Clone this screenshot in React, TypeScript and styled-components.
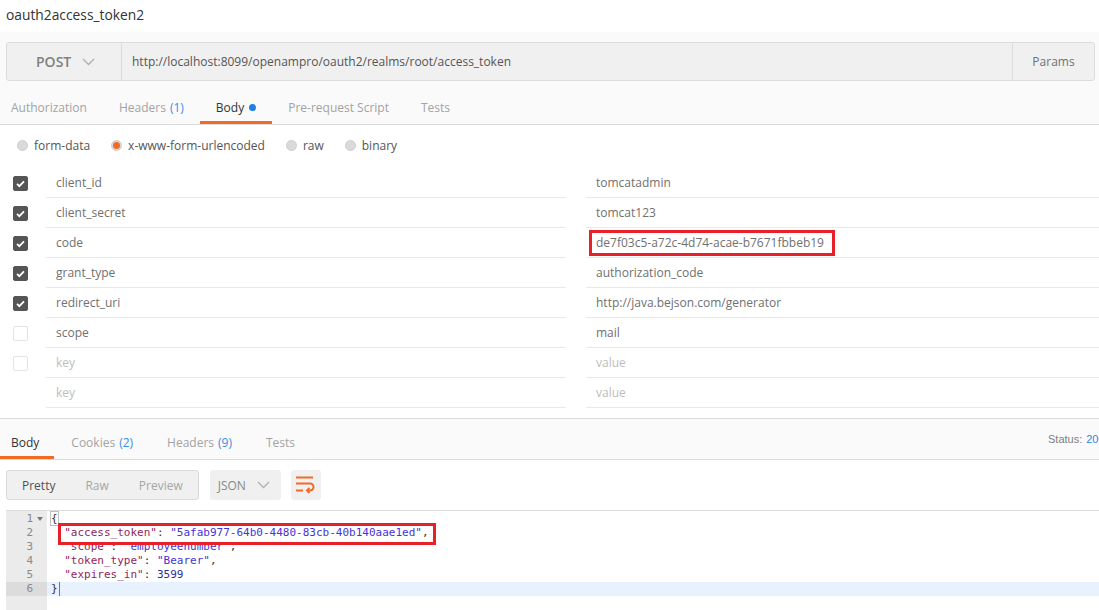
import React from "react";
import styled, { createGlobalStyle } from "styled-components";

const ORANGE = "#f26b24";
const RED = "#e8202a";
const MONO = `"DejaVu Sans Mono", "Liberation Mono", monospace`;

const GlobalStyle = createGlobalStyle`
  html, body { margin: 0; padding: 0; background: #fff; overflow: hidden; }
  body { font-family: "Open Sans", "Noto Sans", sans-serif; }
  * { box-sizing: border-box; }
`;

const Page = styled.div`
  width: 1099px;
  height: 610px;
  overflow: hidden;
  background: #fff;
`;

const Title = styled.div`
  height: 32px;
  padding: 0 6px 4px;
  display: flex;
  align-items: center;
  font-size: 13.8px;
  color: #333;
`;

const RequestPanel = styled.section`
  background: #fafafa;
  border-bottom: 1px solid #dcdcdc;
  padding: 10px 4px 0 6px;
`;

const UrlBar = styled.div`
  display: flex;
  height: 39px;
  border: 1px solid #dcdcdc;
  border-radius: 3px;
  background: #f0f0f0;
`;

const MethodSelect = styled.div`
  width: 115px;
  border-right: 1px solid #dcdcdc;
  display: flex;
  align-items: center;
  padding-left: 29px;
  gap: 11px;
  font-size: 14px;
  font-weight: 600;
  color: #808080;
`;

const UrlText = styled.div`
  flex: 1;
  display: flex;
  align-items: center;
  padding-left: 10px;
  font-size: 12px;
  color: #555;
`;

const ParamsButton = styled.div`
  width: 82px;
  border-left: 1px solid #dcdcdc;
  display: flex;
  align-items: center;
  justify-content: center;
  font-size: 12px;
  color: #707070;
`;

const TabBar = styled.nav`
  display: flex;
  height: 43px;
`;

const Tab = styled.div<{ $active?: boolean }>`
  height: 100%;
  padding: 12px 16px 0;
  display: flex;
  align-items: center;
  border-bottom: 3px solid ${(p) => (p.$active ? ORANGE : "transparent")};
  font-size: 12px;
  color: ${(p) => (p.$active ? "#333" : "#a3a3a3")};
  white-space: nowrap;
  &:first-child { padding-left: 5px; }
`;

const Count = styled.span`
  color: #3b8fe0;
  margin-left: 4px;
`;

const Dot = styled.span`
  display: inline-block;
  width: 7px;
  height: 7px;
  border-radius: 50%;
  background: #1f7ee0;
  margin-left: 5px;
`;

const BodyTypeRow = styled.div`
  display: flex;
  align-items: center;
  height: 43px;
  padding: 0 0 3px 17px;
`;

const RadioOption = styled.label`
  display: flex;
  align-items: center;
  gap: 6px;
  margin-right: 21px;
  font-size: 12px;
  color: #555;
`;

const Radio = styled.span<{ $checked?: boolean }>`
  width: 11px;
  height: 11px;
  border-radius: 50%;
  background: #dadada;
  border: 1px solid #cfcfcf;
  display: flex;
  align-items: center;
  justify-content: center;
  &::after {
    content: "";
    display: ${(p) => (p.$checked ? "block" : "none")};
    width: 7px;
    height: 7px;
    border-radius: 50%;
    background: ${ORANGE};
  }
`;

const Table = styled.div`
  display: flex;
  flex-direction: column;
`;

const Row = styled.div`
  display: grid;
  grid-template-columns: 46px 520px 20px 1fr;
  height: 30px;
`;

const CheckCell = styled.div`
  display: flex;
  align-items: center;
  padding-left: 13px;
`;

const CheckBox = styled.span<{ $checked?: boolean }>`
  width: 15px;
  height: 15px;
  border-radius: 2px;
  background: ${(p) => (p.$checked ? "#555" : "#fff")};
  border: 1px solid ${(p) => (p.$checked ? "#555" : "#e4e4e4")};
  display: flex;
  align-items: center;
  justify-content: center;
`;

const Cell = styled.div<{ $placeholder?: boolean }>`
  border-bottom: 1px solid #e8e8e8;
  display: flex;
  align-items: center;
  padding-left: 10px;
  font-size: 12px;
  color: ${(p) => (p.$placeholder ? "#bdbdbd" : "#707070")};
  white-space: nowrap;
`;

const ValueMark = styled.span`
  display: inline-block;
  border: 3px solid ${RED};
  margin-left: -7px;
  padding: 0 8px 0 4px;
  line-height: 20px;
`;

const ResponseHeader = styled.div`
  display: flex;
  height: 42px;
  margin-top: 10px;
  border-top: 1px solid #dcdcdc;
  border-bottom: 1px solid #dcdcdc;
  background: #fafafa;
`;

const RTab = styled.div<{ $active?: boolean }>`
  padding: 9px 17px 0;
  display: flex;
  align-items: center;
  border-bottom: 3px solid ${(p) => (p.$active ? ORANGE : "transparent")};
  font-size: 12px;
  color: ${(p) => (p.$active ? "#333" : "#a3a3a3")};
  white-space: nowrap;
  &:first-child { padding-left: 11px; padding-right: 15px; }
`;

const Status = styled.div`
  margin-left: auto;
  width: 51px;
  align-self: center;
  white-space: nowrap;
  font-family: "Liberation Sans", Arial, sans-serif;
  font-size: 11px;
  color: #808080;
  span { color: #2a88e6; margin-left: 4px; }
`;

const Toolbar = styled.div`
  display: flex;
  height: 30px;
  margin: 10px 0 0 6px;
`;

const SegGroup = styled.div`
  display: flex;
  border: 1px solid #d9d9d9;
  border-radius: 3px;
  background: #f0f0f0;
`;

const SegButton = styled.div<{ $active?: boolean }>`
  display: flex;
  align-items: center;
  padding: 0 15px;
  font-size: 12px;
  color: ${(p) => (p.$active ? "#505050" : "#a6a6a6")};
`;

const FormatSelect = styled.div`
  display: flex;
  align-items: center;
  gap: 11px;
  margin-left: 11px;
  padding: 0 11px 0 8px;
  background: #f0f0f0;
  border-radius: 3px;
  font-size: 12px;
  color: #888;
`;

const WrapButton = styled.div`
  width: 30px;
  margin-left: 10px;
  background: #f0f0f0;
  border-radius: 3px;
  display: flex;
  align-items: center;
  justify-content: center;
`;

const Editor = styled.div`
  display: flex;
  height: 100px;
  margin: 10px 0 0 6px;
  border-top: 1px solid #dcdcdc;
  font-family: ${MONO};
  font-size: 11px;
`;

const Gutter = styled.div`
  width: 41px;
  padding-top: 1px;
  background: #ebebeb;
  display: flex;
  flex-direction: column;
`;

const GutterCell = styled.div<{ $active?: boolean }>`
  height: 14px;
  line-height: 14px;
  display: grid;
  grid-template-columns: 1fr 14px;
  color: #8a8a8a;
  background: ${(p) => (p.$active ? "#dcdcdc" : "transparent")};
  text-align: right;
`;

const Fold = styled.span`
  display: flex;
  align-items: center;
  justify-content: center;
`;

const Code = styled.div`
  flex: 1;
  padding-top: 1px;
  display: flex;
  flex-direction: column;
`;

const CodeLine = styled.div<{ $active?: boolean }>`
  height: 14px;
  line-height: 14px;
  padding-left: 4px;
  white-space: pre;
  color: #333;
  background: ${(p) => (p.$active ? "#e8f2fe" : "transparent")};
`;

const Key = styled.span`color: #8f1f5f;`;
const Str = styled.span`color: #4433d6;`;
const Num = styled.span`color: #2d2d9a;`;

const Bracket = styled.span`
  outline: 1px solid #bfbfbf;
`;

const Cursor = styled.span`
  display: inline-block;
  width: 0;
  height: 14px;
  vertical-align: top;
  border-left: 1px solid #777;
  margin-left: 1px;
`;

const CodeMark = styled.span`
  position: relative;
  display: inline-block;
  height: 14px;
  &::after {
    content: "";
    position: absolute;
    top: -3px;
    bottom: -5px;
    left: -6px;
    right: -7px;
    border: 3px solid ${RED};
    pointer-events: none;
  }
`;

const Chevron = ({ color = "#b0b0b0" }: { color?: string }) => (
  <svg width="13" height="8" viewBox="0 0 13 8">
    <path d="M1 1l5.5 5.5L12 1" stroke={color} strokeWidth="1.3" fill="none" />
  </svg>
);

const Check = () => (
  <svg width="13" height="13" viewBox="0 0 13 13">
    <path d="M3 6.8l2.3 2.3L10 4.3" stroke="#fff" strokeWidth="1.8" fill="none" />
  </svg>
);

const WrapIcon = () => (
  <svg width="19" height="18" viewBox="0 0 19 18">
    <g stroke={ORANGE} strokeWidth="2" fill="none">
      <path d="M0 1.5H17" />
      <path d="M0 7.5H14a3.5 3.5 0 0 1 0 7H11" />
      <path d="M13.5 12L11 14.5L13.5 17" />
      <path d="M0 14.5H7" />
    </g>
  </svg>
);

const FoldIcon = () => (
  <svg width="6" height="4" viewBox="0 0 6 4">
    <path d="M0 0H6L3 4Z" fill="#777" />
  </svg>
);

type Param = { key: string; value: string; checked?: boolean; box?: boolean; placeholder?: boolean; noCheck?: boolean };

const params: Param[] = [
  { key: "client_id", value: "tomcatadmin", checked: true },
  { key: "client_secret", value: "tomcat123", checked: true },
  { key: "code", value: "de7f03c5-a72c-4d74-acae-b7671fbbeb19", checked: true, box: true },
  { key: "grant_type", value: "authorization_code", checked: true },
  { key: "redirect_uri", value: "http://java.bejson.com/generator", checked: true },
  { key: "scope", value: "mail" },
  { key: "key", value: "value", placeholder: true },
  { key: "key", value: "value", placeholder: true, noCheck: true },
];

export default function App() {
  return (
    <Page>
      <GlobalStyle />
      <Title>oauth2access_token2</Title>
      <RequestPanel>
        <UrlBar>
          <MethodSelect>
            POST
            <Chevron />
          </MethodSelect>
          <UrlText>http://localhost:8099/openampro/oauth2/realms/root/access_token</UrlText>
          <ParamsButton>Params</ParamsButton>
        </UrlBar>
        <TabBar>
          <Tab>Authorization</Tab>
          <Tab>
            Headers<Count>(1)</Count>
          </Tab>
          <Tab $active>
            Body<Dot />
          </Tab>
          <Tab>Pre-request Script</Tab>
          <Tab>Tests</Tab>
        </TabBar>
      </RequestPanel>

      <BodyTypeRow>
        <RadioOption>
          <Radio />
          form-data
        </RadioOption>
        <RadioOption>
          <Radio $checked />
          x-www-form-urlencoded
        </RadioOption>
        <RadioOption>
          <Radio />
          raw
        </RadioOption>
        <RadioOption>
          <Radio />
          binary
        </RadioOption>
      </BodyTypeRow>

      <Table>
        {params.map((p, i) => (
          <Row key={i}>
            <CheckCell>
              {!p.noCheck && <CheckBox $checked={p.checked}>{p.checked && <Check />}</CheckBox>}
            </CheckCell>
            <Cell $placeholder={p.placeholder}>{p.key}</Cell>
            <div />
            <Cell $placeholder={p.placeholder}>
              {p.box ? <ValueMark>{p.value}</ValueMark> : p.value}
            </Cell>
          </Row>
        ))}
      </Table>

      <ResponseHeader>
        <RTab $active>Body</RTab>
        <RTab>
          Cookies<Count>(2)</Count>
        </RTab>
        <RTab>
          Headers<Count>(9)</Count>
        </RTab>
        <RTab>Tests</RTab>
        <Status>
          Status:<span>200 OK</span>
        </Status>
      </ResponseHeader>

      <Toolbar>
        <SegGroup>
          <SegButton $active>Pretty</SegButton>
          <SegButton>Raw</SegButton>
          <SegButton>Preview</SegButton>
        </SegGroup>
        <FormatSelect>
          JSON
          <Chevron />
        </FormatSelect>
        <WrapButton>
          <WrapIcon />
        </WrapButton>
      </Toolbar>

      <Editor>
        <Gutter>
          {[1, 2, 3, 4, 5, 6].map((n) => (
            <GutterCell key={n} $active={n === 6}>
              <span>{n}</span>
              <Fold>{n === 1 && <FoldIcon />}</Fold>
            </GutterCell>
          ))}
        </Gutter>
        <Code>
          <CodeLine>
            <Bracket>{"{"}</Bracket>
          </CodeLine>
          <CodeLine>
            {"  "}
            <CodeMark>
              <Key>"access_token"</Key>: <Str>"5afab977-64b0-4480-83cb-40b140aae1ed"</Str>,
            </CodeMark>
          </CodeLine>
          <CodeLine>
            {"  "}
            <Key>"scope"</Key>: <Str>"employeenumber"</Str>,
          </CodeLine>
          <CodeLine>
            {"  "}
            <Key>"token_type"</Key>: <Str>"Bearer"</Str>,
          </CodeLine>
          <CodeLine>
            {"  "}
            <Key>"expires_in"</Key>: <Num>3599</Num>
          </CodeLine>
          <CodeLine $active>
            {"}"}
            <Cursor />
          </CodeLine>
        </Code>
      </Editor>
    </Page>
  );
}
